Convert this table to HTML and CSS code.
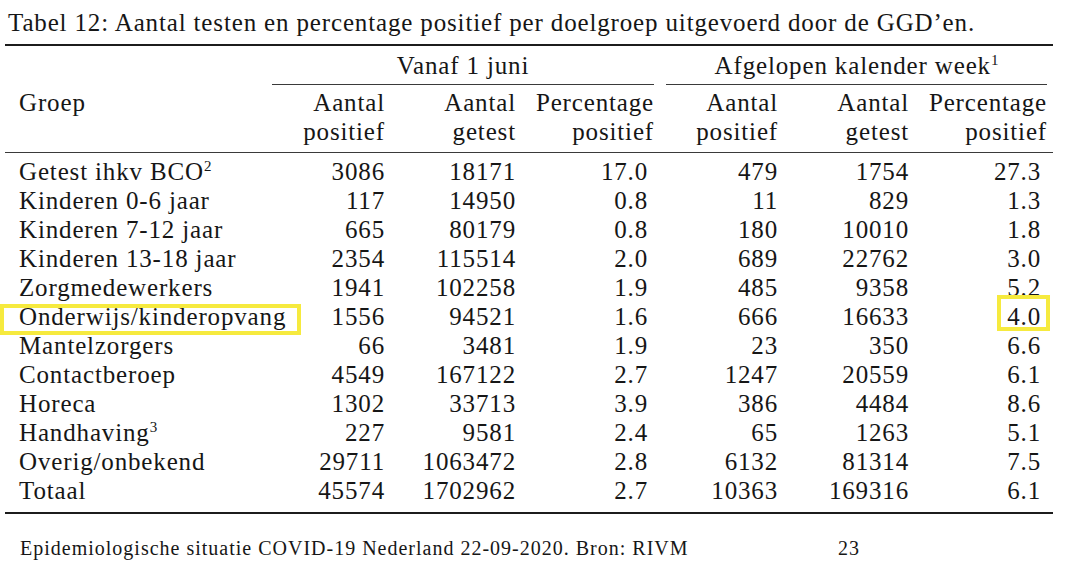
FILE: index.html
```html
<!DOCTYPE html>
<html lang="nl">
<head>
<meta charset="utf-8">
<title>Tabel 12</title>
<link rel="stylesheet" href="styles.css">
</head>
<body>
<div class="page">
  <div class="caption">Tabel 12: Aantal testen en percentage positief per doelgroep uitgevoerd door de GGD’en.</div>
  <table class="data">
    <colgroup>
      <col class="c-grp"><col class="c-b"><col class="c-c"><col class="c-d"><col class="c-e"><col class="c-f"><col class="c-g">
    </colgroup>
    <thead>
      <tr class="h1">
        <th class="grp"></th>
        <th colspan="3" class="span"><div class="cm">Vanaf 1 juni</div></th>
        <th colspan="3" class="span"><div class="cm">Afgelopen kalender week<sup>1</sup></div></th>
      </tr>
      <tr class="h2">
        <th class="grp">Groep</th>
        <th class="num">Aantal<br>positief</th>
        <th class="num">Aantal<br>getest</th>
        <th class="num pct">Percentage<br>positief</th>
        <th class="num">Aantal<br>positief</th>
        <th class="num">Aantal<br>getest</th>
        <th class="num pct">Percentage<br>positief</th>
      </tr>
    </thead>
    <tbody>
      <tr class="first"><td class="grp">Getest ihkv BCO<sup>2</sup></td><td>3086</td><td>18171</td><td class="p">17.0</td><td>479</td><td>1754</td><td class="p">27.3</td></tr>
      <tr><td class="grp">Kinderen 0-6 jaar</td><td>117</td><td>14950</td><td class="p">0.8</td><td>11</td><td>829</td><td class="p">1.3</td></tr>
      <tr><td class="grp">Kinderen 7-12 jaar</td><td>665</td><td>80179</td><td class="p">0.8</td><td>180</td><td>10010</td><td class="p">1.8</td></tr>
      <tr><td class="grp">Kinderen 13-18 jaar</td><td>2354</td><td>115514</td><td class="p">2.0</td><td>689</td><td>22762</td><td class="p">3.0</td></tr>
      <tr><td class="grp">Zorgmedewerkers</td><td>1941</td><td>102258</td><td class="p">1.9</td><td>485</td><td>9358</td><td class="p">5.2</td></tr>
      <tr><td class="grp"><span class="hl hl-row">Onderwijs/kinderopvang</span></td><td>1556</td><td>94521</td><td class="p">1.6</td><td>666</td><td>16633</td><td class="p"><span class="hl hl-cell">4.0</span></td></tr>
      <tr><td class="grp">Mantelzorgers</td><td>66</td><td>3481</td><td class="p">1.9</td><td>23</td><td>350</td><td class="p">6.6</td></tr>
      <tr><td class="grp">Contactberoep</td><td>4549</td><td>167122</td><td class="p">2.7</td><td>1247</td><td>20559</td><td class="p">6.1</td></tr>
      <tr><td class="grp">Horeca</td><td>1302</td><td>33713</td><td class="p">3.9</td><td>386</td><td>4484</td><td class="p">8.6</td></tr>
      <tr><td class="grp">Handhaving<sup>3</sup></td><td>227</td><td>9581</td><td class="p">2.4</td><td>65</td><td>1263</td><td class="p">5.1</td></tr>
      <tr><td class="grp">Overig/onbekend</td><td>29711</td><td>1063472</td><td class="p">2.8</td><td>6132</td><td>81314</td><td class="p">7.5</td></tr>
      <tr class="last"><td class="grp">Totaal</td><td>45574</td><td>1702962</td><td class="p">2.7</td><td>10363</td><td>169316</td><td class="p">6.1</td></tr>
    </tbody>
  </table>
  <div class="footer">
    <span class="foot-text">Epidemiologische situatie COVID-19 Nederland 22-09-2020. Bron: RIVM</span>
    <span class="foot-page">23</span>
  </div>
</div>
</body>
</html>
```
FILE: styles.css
```css
html, body {
  margin: 0;
  padding: 0;
  background: #ffffff;
}
body {
  width: 1067px;
  height: 567px;
  overflow: hidden;
  font-family: "Liberation Serif", "Times New Roman", serif;
  color: #161616;
}
.page {
  position: relative;
  padding-top: 8px;
}
.caption {
  font-family: "Liberation Serif", "Times New Roman", serif;
  font-size: 25px;
  letter-spacing: 0.85px;
  line-height: 29px;
  padding-left: 8px;
  height: 36px;
  white-space: nowrap;
}
.data {
  margin-left: 5px;
  width: 1048px;
  border-collapse: collapse;
  table-layout: fixed;
  font-family: "Liberation Serif", "Times New Roman", serif;
  font-size: 25px;
  letter-spacing: 0.85px;
  line-height: 29px;
  border-top: 2px solid #1c1c1c;
  border-bottom: 2px solid #1c1c1c;
}
.data th, .data td {
  font-family: "Liberation Serif", "Times New Roman", serif;
}
.c-grp { width: 261px; }
.c-b { width: 125px; }
.c-c { width: 131px; }
.c-d { width: 138px; }
.c-e { width: 124px; }
.c-f { width: 131px; }
.c-g { width: 138px; }

th, td {
  padding: 0 6px 0 0;
  font-weight: normal;
  white-space: nowrap;
  text-align: right;
}
.grp {
  text-align: left;
  padding-left: 14px;
}
td.p { padding-right: 12px; }
th.pct { padding-right: 6px; }

.h1 th { padding-top: 5px; padding-bottom: 0; }
.h1 th.span { padding: 5px 6px 0 6px; text-align: center; }
.cm {
  border-bottom: 1.5px solid #3a3a3a;
  padding-bottom: 4px;
}
.h2 th {
  padding-top: 3px;
  padding-bottom: 6px;
  border-bottom: 1.5px solid #3a3a3a;
  vertical-align: top;
}
tr.first td { padding-top: 4px; }
tr.last td { padding-bottom: 7px; }

sup {
  font-size: 15px;
  letter-spacing: 0;
  line-height: 0;
  vertical-align: 9px;
}

.hl {
  position: relative;
  display: inline-block;
  line-height: 29px;
}
.hl::after {
  content: "";
  position: absolute;
  border: 4px solid #f6ea3e;
}
.hl-row::after {
  left: -19px;
  width: 293px;
  top: 1.5px;
  bottom: -3.5px;
}
.hl-cell::after {
  right: -9px;
  width: 45px;
  top: -7.5px;
  bottom: 0;
}

.footer {
  display: flex;
  font-family: "Liberation Serif", "Times New Roman", serif;
  font-size: 20px;
  letter-spacing: 1px;
  line-height: 24px;
  margin-top: 22px;
  padding-left: 20px;
}
.foot-text { width: 818px; }
```
